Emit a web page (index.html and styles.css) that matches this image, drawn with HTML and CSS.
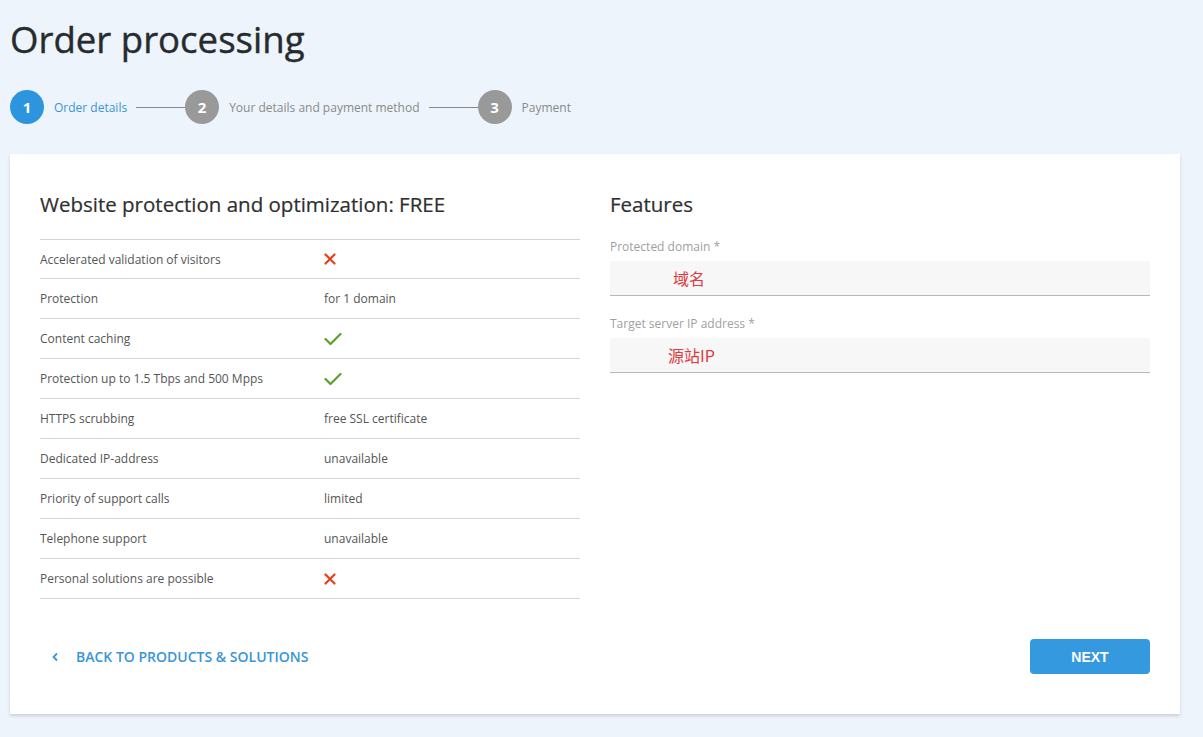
FILE: index.html
```html
<!DOCTYPE html>
<html lang="en">
<head>
<meta charset="utf-8">
<title>Order processing</title>
<link rel="stylesheet" href="styles.css">
</head>
<body>
<div class="page">
  <h1 class="title">Order processing</h1>
  <div class="steps">
    <div class="step active"><span class="num">1</span><span class="label">Order details</span></div>
    <span class="line"></span>
    <div class="step"><span class="num">2</span><span class="label">Your details and payment method</span></div>
    <span class="line"></span>
    <div class="step"><span class="num">3</span><span class="label">Payment</span></div>
  </div>
  <div class="card">
    <div class="cols">
      <div class="col">
        <h2 class="heading">Website protection and optimization: FREE</h2>
        <div class="table">
          <div class="row"><span class="key">Accelerated validation of visitors</span><span class="val"><svg class="ico" width="12" height="12" viewBox="0 0 12 12"><path d="M1.5 1.5L10.5 10.5M10.5 1.5L1.5 10.5" stroke="#e8401c" stroke-width="2.2" stroke-linecap="round"/></svg></span></div>
          <div class="row"><span class="key">Protection</span><span class="val">for 1 domain</span></div>
          <div class="row"><span class="key">Content caching</span><span class="val"><svg class="ico" width="18" height="14" viewBox="0 0 18 14"><path d="M1.5 7L6.5 12L16.5 2" fill="none" stroke="#5aa02c" stroke-width="2.2" stroke-linecap="round" stroke-linejoin="round"/></svg></span></div>
          <div class="row"><span class="key">Protection up to 1.5 Tbps and 500 Mpps</span><span class="val"><svg class="ico" width="18" height="14" viewBox="0 0 18 14"><path d="M1.5 7L6.5 12L16.5 2" fill="none" stroke="#5aa02c" stroke-width="2.2" stroke-linecap="round" stroke-linejoin="round"/></svg></span></div>
          <div class="row"><span class="key">HTTPS scrubbing</span><span class="val">free SSL certificate</span></div>
          <div class="row"><span class="key">Dedicated IP-address</span><span class="val">unavailable</span></div>
          <div class="row"><span class="key">Priority of support calls</span><span class="val">limited</span></div>
          <div class="row"><span class="key">Telephone support</span><span class="val">unavailable</span></div>
          <div class="row"><span class="key">Personal solutions are possible</span><span class="val"><svg class="ico" width="12" height="12" viewBox="0 0 12 12"><path d="M1.5 1.5L10.5 10.5M10.5 1.5L1.5 10.5" stroke="#e8401c" stroke-width="2.2" stroke-linecap="round"/></svg></span></div>
        </div>
      </div>
      <div class="col">
        <h2 class="heading">Features</h2>
        <div class="field">
          <label class="flabel">Protected domain *</label>
          <div class="input"><span class="ival ival1">域名</span></div>
        </div>
        <div class="field">
          <label class="flabel">Target server IP address *</label>
          <div class="input"><span class="ival ival2">源站IP</span></div>
        </div>
      </div>
    </div>
    <div class="footer">
      <a class="back" href="#"><svg class="chev" width="8" height="10" viewBox="0 0 8 10"><path d="M6 1.5L2.5 5L6 8.5" fill="none" stroke="#3a95d8" stroke-width="1.8"/></svg><span>BACK TO PRODUCTS &amp; SOLUTIONS</span></a>
      <button class="next">NEXT</button>
    </div>
  </div>
</div>
</body>
</html>
```
FILE: styles.css
```css
* { box-sizing: border-box; }
html, body { margin: 0; padding: 0; }
body {
  background: #edf4fb;
  font-family: "Open Sans", "Noto Sans CJK SC", sans-serif;
  color: #333;
  width: 1203px;
  height: 737px;
  overflow: hidden;
}
.page { padding: 14px 23px 0 10px; }
.title {
  margin: 0;
  font-size: 36.6px;
  font-weight: 400;
  line-height: 50px;
  color: #272b2e;
  -webkit-text-stroke: 0.4px #272b2e;
}
.steps {
  display: flex;
  align-items: center;
  margin-top: 26px;
  height: 34px;
}
.step { display: flex; align-items: center; }
.num {
  width: 34px; height: 34px;
  border-radius: 50%;
  background: #999;
  color: #fff;
  font-weight: 700;
  font-size: 15px;
  display: flex; align-items: center; justify-content: center;
}
.step.active .num { background: #2d95df; }
.label { margin-left: 10px; font-size: 12px; color: #8a8a8a; }
.step.active .label { color: #3a95d8; }
.line { width: 49px; height: 1px; background: #888; margin-left: 9px; }
.card {
  margin-top: 30px;
  background: #fff;
  padding: 36px 30px 41px 30px;
  box-shadow: 0 2px 3px rgba(0,0,0,0.15);
  height: 560px;
}
.cols { display: flex; gap: 30px; }
.col { flex: 1; }
.heading {
  margin: 0;
  font-size: 20.5px;
  font-weight: 400;
  line-height: 28px;
  color: #2f2f2f;
  -webkit-text-stroke: 0.2px #2f2f2f;
}
.table { margin-top: 21px; border-top: 1px solid #d4d4d4; }
.row {
  display: flex;
  align-items: center;
  height: 40px;
  border-bottom: 1px solid #d4d4d4;
  font-size: 12px;
  color: #555;
}
.row:first-child { height: 39px; }
.key { width: 284px; }
.val { display: flex; align-items: center; }
.ico { display: block; }
.field { margin-top: 20px; }
.field + .field { margin-top: 19px; }
.flabel { display: block; font-size: 12px; color: #a0a0a0; line-height: 18px; }
.input {
  margin-top: 5px;
  height: 35px;
  background: #f7f7f7;
  border-bottom: 1px solid #b8b8b8;
  display: flex; align-items: center;
}
.ival { color: #e0393e; font-size: 16px; font-family: "Noto Sans CJK SC", sans-serif; }
.ival1 { margin-left: 63px; }
.ival2 { margin-left: 58px; }
.footer {
  margin-top: 40px;
  display: flex;
  align-items: center;
  justify-content: space-between;
}
.back {
  display: flex; align-items: center;
  text-decoration: none;
  color: #3a95d8;
  font-weight: 600;
  font-size: 14px;
  margin-left: 11px;
}
.chev { margin-right: 17px; }
.next {
  width: 120px; height: 35px;
  border: none; border-radius: 4px;
  background: #3599e0;
  color: #fff;
  font-family: "Liberation Sans", Arial, sans-serif;
  font-weight: 700;
  font-size: 14px;
}
```
